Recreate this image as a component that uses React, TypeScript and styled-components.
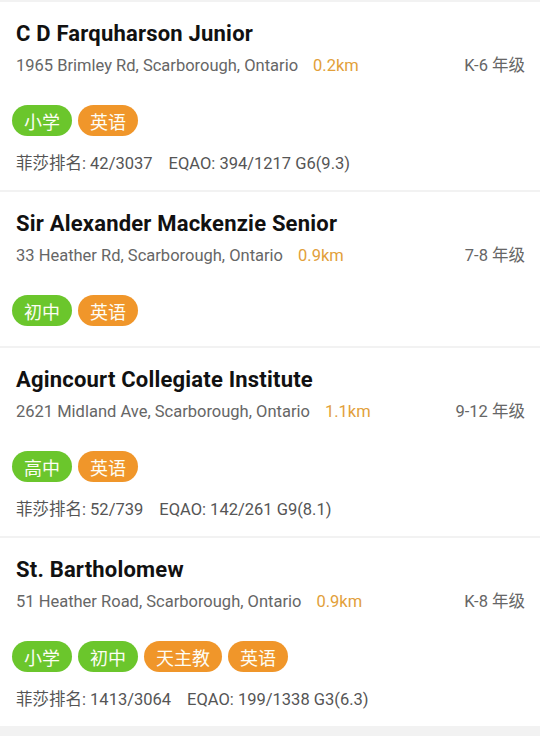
import React from "react";
import styled, { createGlobalStyle } from "styled-components";

const GlobalStyle = createGlobalStyle`
  html, body {
    margin: 0;
    padding: 0;
    background: #f2f2f2;
    font-family: Roboto, "Noto Sans CJK SC", "Noto Sans", sans-serif;
  }
  * { box-sizing: border-box; }
`;

const List = styled.div`
  display: flex;
  flex-direction: column;
  gap: 2px;
  padding-top: 2px;
  width: 540px;
  min-height: 736px;
  background: #f2f2f2;
`;

const Card = styled.div`
  background: #ffffff;
  padding: 17px 15px 12px 16px;
  display: flex;
  flex-direction: column;
`;

const Title = styled.div`
  font-size: 22px;
  letter-spacing: 0.2px;
  font-weight: 700;
  color: #111;
  line-height: 30px;
`;

const AddressRow = styled.div`
  display: flex;
  align-items: center;
  margin-top: 2px;
  font-size: 16.5px;
  line-height: 30px;
  color: #666;
`;

const Address = styled.span`
  white-space: nowrap;
`;

const Distance = styled.span`
  color: #e2a03a;
  margin-left: 15px;
`;

const Grade = styled.span`
  margin-left: auto;
  color: #666;
`;

const Tags = styled.div`
  display: flex;
  gap: 6px;
  margin-top: 24px;
  margin-bottom: 8px;
`;

const Tag = styled.span<{ $tone: "green" | "orange" }>`
  display: inline-flex;
  align-items: center;
  justify-content: center;
  height: 31px;
  padding: 0 12px;
  border-radius: 16px;
  font-size: 18px;
  color: #fdfdf5;
  background: ${(p) => (p.$tone === "green" ? "#6bc62c" : "#f0962a")};
  &:first-child {
    margin-left: -4px;
  }
`;

const Stats = styled.div`
  display: flex;
  gap: 16px;
  margin-top: 6px;
  font-size: 16.5px;
  line-height: 28px;
  color: #555;
`;

type TagDef = { label: string; tone: "green" | "orange" };
type School = {
  name: string;
  address: string;
  distance: string;
  grade: string;
  tags: TagDef[];
  stats?: [string, string];
};

const schools: School[] = [
  {
    name: "C D Farquharson Junior",
    address: "1965 Brimley Rd, Scarborough, Ontario",
    distance: "0.2km",
    grade: "K-6 年级",
    tags: [
      { label: "小学", tone: "green" },
      { label: "英语", tone: "orange" },
    ],
    stats: ["菲莎排名: 42/3037", "EQAO: 394/1217 G6(9.3)"],
  },
  {
    name: "Sir Alexander Mackenzie Senior",
    address: "33 Heather Rd, Scarborough, Ontario",
    distance: "0.9km",
    grade: "7-8 年级",
    tags: [
      { label: "初中", tone: "green" },
      { label: "英语", tone: "orange" },
    ],
  },
  {
    name: "Agincourt Collegiate Institute",
    address: "2621 Midland Ave, Scarborough, Ontario",
    distance: "1.1km",
    grade: "9-12 年级",
    tags: [
      { label: "高中", tone: "green" },
      { label: "英语", tone: "orange" },
    ],
    stats: ["菲莎排名: 52/739", "EQAO: 142/261 G9(8.1)"],
  },
  {
    name: "St. Bartholomew",
    address: "51 Heather Road, Scarborough, Ontario",
    distance: "0.9km",
    grade: "K-8 年级",
    tags: [
      { label: "小学", tone: "green" },
      { label: "初中", tone: "green" },
      { label: "天主教", tone: "orange" },
      { label: "英语", tone: "orange" },
    ],
    stats: ["菲莎排名: 1413/3064", "EQAO: 199/1338 G3(6.3)"],
  },
];

export default function App() {
  return (
    <>
      <GlobalStyle />
      <List>
        {schools.map((s) => (
          <Card key={s.name}>
            <Title>{s.name}</Title>
            <AddressRow>
              <Address>{s.address}</Address>
              <Distance>{s.distance}</Distance>
              <Grade>{s.grade}</Grade>
            </AddressRow>
            <Tags>
              {s.tags.map((t) => (
                <Tag key={t.label} $tone={t.tone}>
                  {t.label}
                </Tag>
              ))}
            </Tags>
            {s.stats && (
              <Stats>
                <span>{s.stats[0]}</span>
                <span>{s.stats[1]}</span>
              </Stats>
            )}
          </Card>
        ))}
      </List>
    </>
  );
}
